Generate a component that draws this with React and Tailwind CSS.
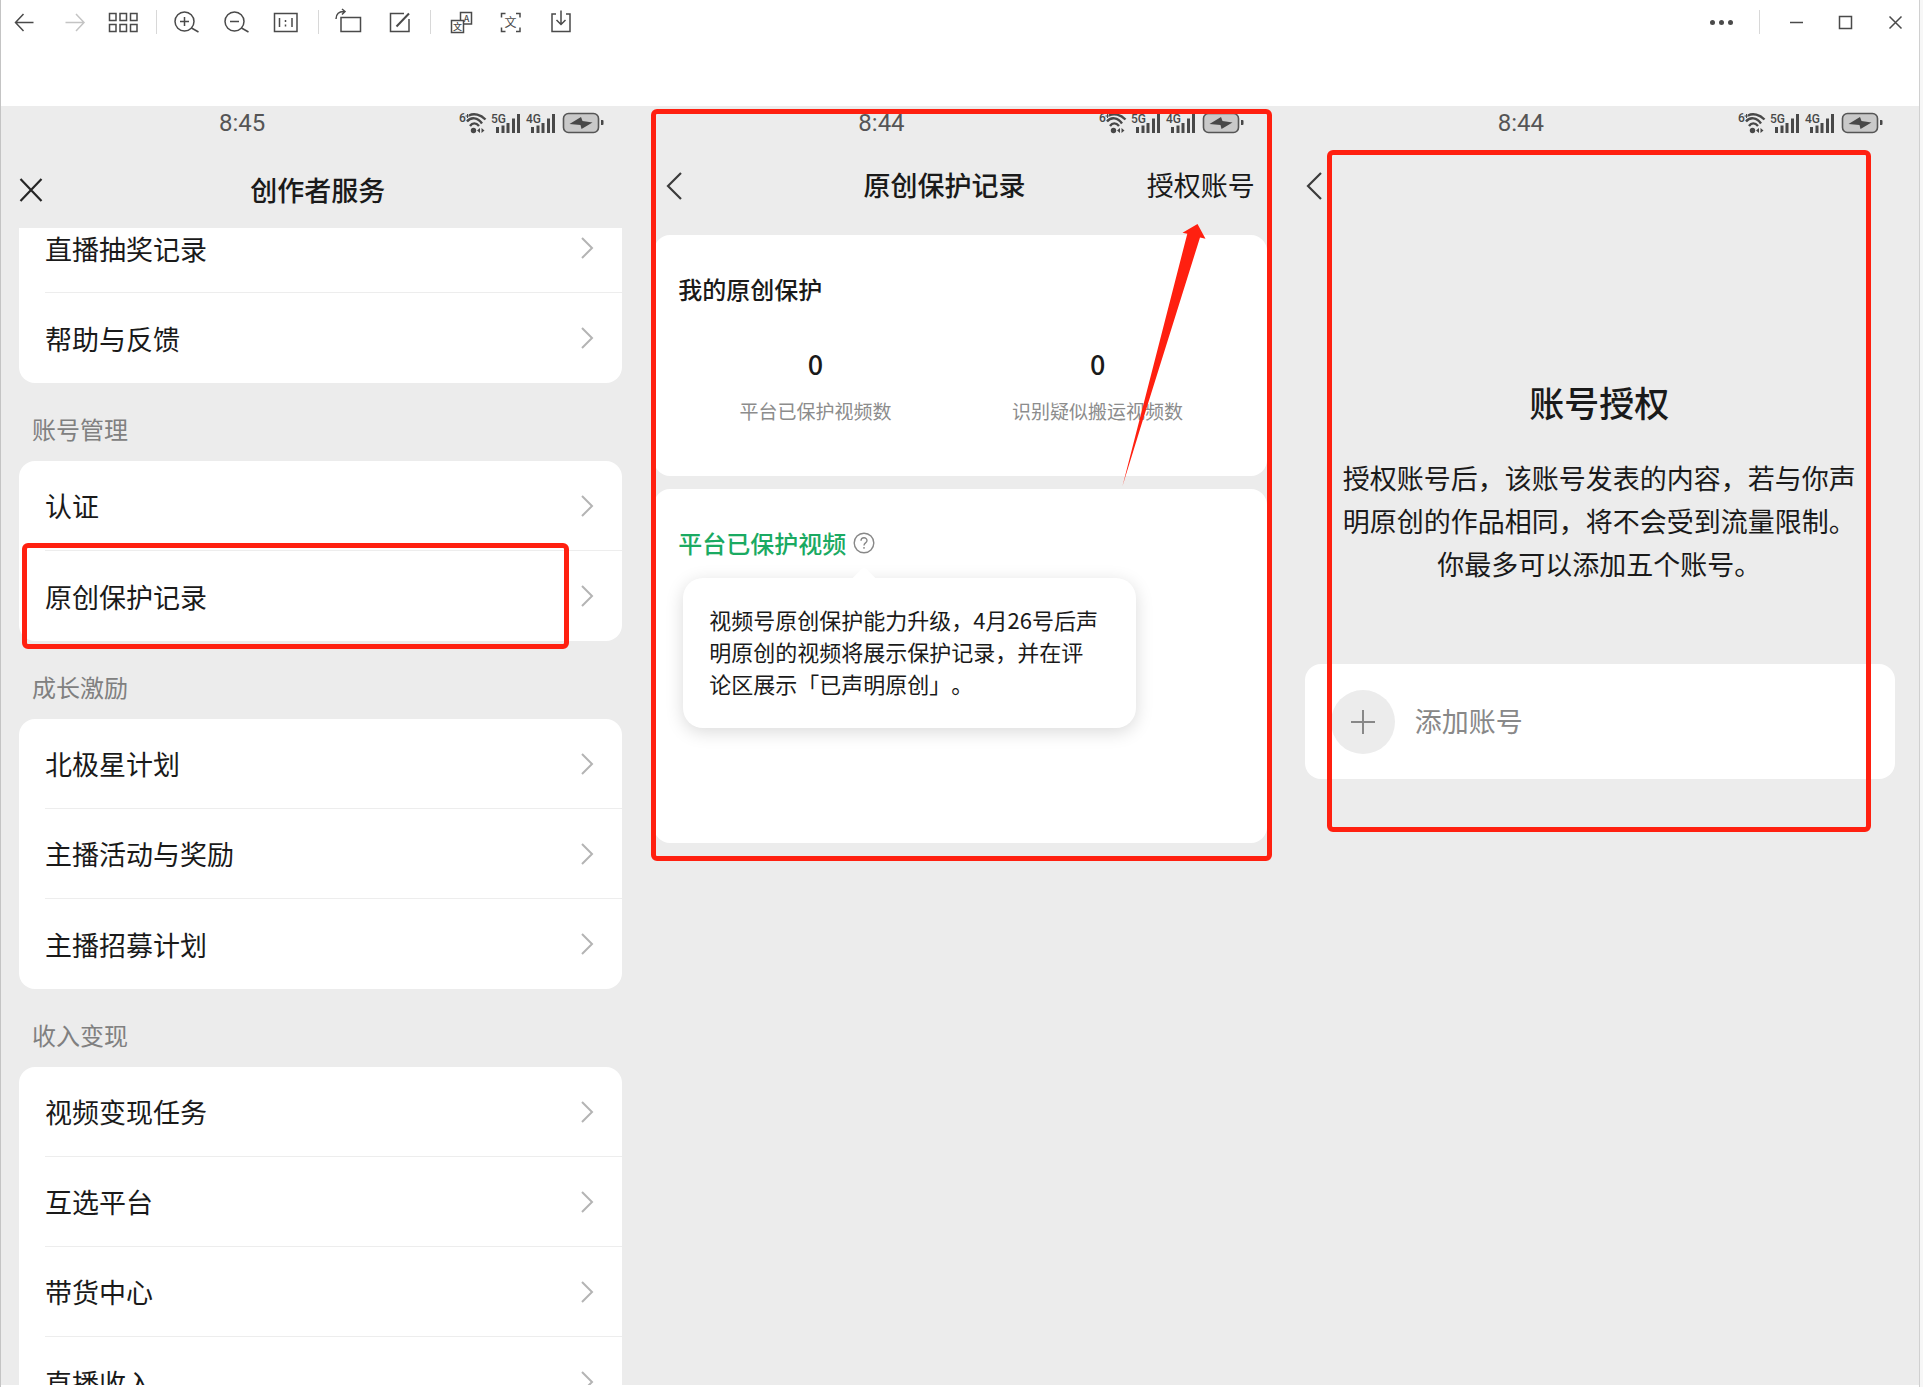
import React from 'react';

const sections = [
  { title: '账号管理', items: ['认证', '原创保护记录'] },
  { title: '成长激励', items: ['北极星计划', '主播活动与奖励', '主播招募计划'] },
  { title: '收入变现', items: ['视频变现任务', '互选平台', '带货中心', '直播收入'] },
];

function ToolButton({ label, disabled, children }) {
  return (
    <button type="button" aria-label={label} disabled={disabled} className="h-11 w-[50px] shrink-0">
      <svg
        width="50"
        height="44"
        viewBox="0 0 50 44"
        fill="none"
        stroke={disabled ? '#c4c4c4' : '#4a4a4a'}
        strokeWidth="1.5"
      >
        {children}
      </svg>
    </button>
  );
}

function Divider({ wide }) {
  return (
    <div className={wide ? 'flex w-5 shrink-0 justify-center' : 'flex w-3 shrink-0 justify-center pr-0.5'}>
      <span className="h-6 w-px bg-[#d8d8d8]" />
    </div>
  );
}

function Toolbar() {
  return (
    <header className="flex h-[106px] shrink-0 items-start justify-between bg-white">
      <div className="flex items-center">
        <ToolButton label="后退">
          <path d="M32.500 22.500H14.500M22.500 14L14.500 22.500L22.500 31" />
        </ToolButton>
        <ToolButton label="前进" disabled>
          <path d="M14.500 22.500H33M25 14L33 22.500L25 31" />
        </ToolButton>
        <ToolButton label="缩略图">
          <path d="M8.500 13.500h6.500v7H8.500zM19 13.500h6.500v7H19zM29.500 13.500h6.500v7h-6.500zM8.500 24.500h6.500v7H8.500zM19 24.500h6.500v7H19zM29.500 24.500h6.500v7h-6.500z" />
        </ToolButton>
        <Divider />
        <ToolButton label="放大">
          <circle cx="21.500" cy="21.500" r="9.500" />
          <path d="M17 21.500h9M21.500 17v9M28.500 28l7 4" />
        </ToolButton>
        <ToolButton label="缩小">
          <circle cx="21.500" cy="21.500" r="9.500" />
          <path d="M17 21.500h9M28.500 28l7 4" />
        </ToolButton>
        <ToolButton label="原始大小">
          <path d="M11.500 13.500h22.500v18H11.500zM16.500 18v9M29 18v9M22.500 20v2M22.500 24.500v2" />
        </ToolButton>
        <Divider />
        <ToolButton label="旋转">
          <path d="M16 17.500h19.500v14H16zM11 19C11 14 14 11 19.500 11.500M17 9l3 2.500l-3 3" />
        </ToolButton>
        <ToolButton label="编辑">
          <path d="M29 13.500H15.500v18H34V19" />
          <path d="M34 13.500L21.500 26.500" strokeWidth="2" />
        </ToolButton>
        <Divider />
        <ToolButton label="翻译">
          <path d="M23.500 20v-7.500h11V24h-7.500M14.500 20.500h12v12h-12z" />
          <g fill="#4a4a4a" stroke="none" textAnchor="middle" className="font-medium">
            <text x="29.500" y="21.500" fontSize="9">A</text>
            <text x="20.500" y="30" fontSize="9">文</text>
          </g>
        </ToolButton>
        <ToolButton label="识别文字">
          <path d="M18.500 13.500h-4v4M29 13.500h4v4M14.500 27.500v4h4M33 27.500v4h-4" />
          <text x="23.500" y="27" fontSize="12" textAnchor="middle" fill="#4a4a4a" stroke="none">文</text>
        </ToolButton>
        <ToolButton label="保存">
          <path d="M19 14h-4v17.500h18V14h-4M24 10.500v14M19.500 20L24 24.500l4.500-4.500" />
        </ToolButton>
      </div>
      <div className="flex items-center">
        <ToolButton label="更多">
          <g fill="#4a4a4a" stroke="none">
            <circle cx="13.500" cy="22.500" r="2.500" />
            <circle cx="22.500" cy="22.500" r="2.500" />
            <circle cx="31.500" cy="22.500" r="2.500" />
          </g>
        </ToolButton>
        <Divider wide />
        <ToolButton label="最小化">
          <path d="M21 22.500h13" />
        </ToolButton>
        <ToolButton label="最大化">
          <path d="M20.500 16.500h12v12h-12z" />
        </ToolButton>
        <ToolButton label="关闭">
          <path d="M20.500 16.500l12 12M32.500 16.500l-12 12" />
        </ToolButton>
      </div>
    </header>
  );
}

function StatusIcons() {
  return (
    <svg width="146" height="23" viewBox="0 0 146 23" fill="#484848" className="font-[Roboto,sans-serif] font-medium" aria-hidden="true">
      <text x="0" y="10" fontSize="12">6</text>
      <path d="M6.500 4h4M8.500 2v4" stroke="#484848" strokeWidth="1" />
      <g fill="none" stroke="#484848" strokeWidth="2.400">
        <path d="M10 3.500C15 1 21.500 2.500 26.500 7.500" />
        <path d="M8 9.500C12 4.500 19 5.500 23 11.500" />
        <path d="M11 14C13.500 10.500 17 10.500 20 14" />
      </g>
      <circle cx="14.500" cy="18.500" r="2.700" />
      <path d="M18 18.500l3-2.500v5zM25.500 18.500l-3-2.500v5z" />
      <text x="32" y="11" fontSize="12">5G</text>
      <path d="M37 15h3v6h-3zM42.500 13.500h3V21h-3zM47.500 11h3v10h-3zM53 6.500h3V21h-3zM58 2h3v19h-3z" />
      <text x="67" y="11" fontSize="12">4G</text>
      <path d="M72 15h3v6h-3zM77.500 13.500h3V21h-3zM82.500 11h3v10h-3zM88 6.500h3V21h-3zM93 2h3v19h-3z" />
      <rect x="104.500" y="1.500" width="35" height="19" rx="5" fill="#c9c9c9" stroke="#555555" strokeWidth="1.600" />
      <path d="M142 8h1.500q1 0 1 1v3q0 1-1 1H142z" />
      <path d="M110.500 12L122 5L123.500 9L133.500 10.500L122.500 17L121.500 13z" />
    </svg>
  );
}

function StatusBar({ time }) {
  return (
    <div className="flex h-[34px] shrink-0 items-center justify-between pl-[218px] pr-[35px]">
      <span className="font-[Roboto,sans-serif] text-2xl text-[#555555]">{time}</span>
      <StatusIcons />
    </div>
  );
}

function BackButton() {
  return (
    <button type="button" aria-label="返回">
      <svg width="16" height="30" viewBox="0 0 16 30" fill="none" stroke="#3c3c3c" strokeWidth="2.200">
        <path d="M15 2L2 15l13 13" />
      </svg>
    </button>
  );
}

function MenuRow({ label, marked }) {
  return (
    <li className="group relative pl-[26px]">
      <a href="#" className="flex h-[90px] items-center justify-between border-b border-[#ededed] pr-7 group-last:border-b-0">
        <span className="pt-0.5">{label}</span>
        <svg width="14" height="24" viewBox="0 0 14 24" fill="none" stroke="#b4b4b4" strokeWidth="2">
          <path d="M2 2l10 10L2 22" />
        </svg>
      </a>
      {marked && <div className="absolute -top-2 -bottom-2 left-[3px] right-[53px] rounded-md border-5 border-[#ff2010]" />}
    </li>
  );
}

function CreatorPanel() {
  return (
    <section className="flex min-w-0 flex-1 flex-col overflow-hidden">
      <StatusBar time="8:45" />
      <div className="grid h-[88px] shrink-0 grid-cols-[1fr_auto_1fr] items-center pt-4 pb-1 pl-[18px] pr-6">
        <button type="button" aria-label="关闭页面" className="justify-self-start">
          <svg width="24" height="24" viewBox="0 0 24 24" fill="none" stroke="#262626" strokeWidth="2.200">
            <path d="M1.500 1l21 22M22.500 1l-21 22" />
          </svg>
        </button>
        <h1 className="text-[27px] leading-10 font-medium">创作者服务</h1>
      </div>
      {/* scrolled list, its first row is cut off by the header */}
      <div className="flex min-h-0 flex-1 flex-col justify-start overflow-hidden px-[18px] text-[27px]">
        <ul className="shrink-0 overflow-hidden rounded-b-2xl bg-white">
          <li className="pl-[26px]">
            <a href="#" className="flex h-[65px] items-start justify-between border-b border-[#ededed] pr-7">
              <span className="leading-[42px]">直播抽奖记录</span>
              <svg width="14" height="40" viewBox="0 0 14 40" fill="none" stroke="#b4b4b4" strokeWidth="2">
                <path d="M2 10l10 10L2 30" />
              </svg>
            </a>
          </li>
          <MenuRow label="帮助与反馈" />
        </ul>
        {sections.map((section) => (
          <React.Fragment key={section.title}>
            <h2 className="flex h-[78px] shrink-0 items-center pt-3.5 pl-[13px] text-2xl text-[#808080]">{section.title}</h2>
            <ul className="shrink-0 rounded-2xl bg-white">
              {section.items.map((item) => (
                <MenuRow key={item} label={item} marked={item === '原创保护记录'} />
              ))}
            </ul>
          </React.Fragment>
        ))}
      </div>
    </section>
  );
}

function Stat({ value, label }) {
  return (
    <div className="flex flex-col items-center">
      <span className="text-[27px] leading-10 font-medium">{value}</span>
      <span className="mt-[7px] text-[19px] leading-10 text-[#8c8c8c]">{label}</span>
    </div>
  );
}

function ProtectionPanel() {
  return (
    <section className="relative min-w-0 flex-1">
      <StatusBar time="8:44" />
      <div className="grid h-[95px] grid-cols-[1fr_auto_1fr] items-center pt-2 pb-3 pl-[26px] pr-[25px] text-[27px]">
        <BackButton />
        <h1 className="pr-8 font-medium">原创保护记录</h1>
        <button type="button" className="justify-self-end">授权账号</button>
      </div>
      <div className="flex flex-col gap-[13px] pl-[14px] pr-[13px]">
        <div className="rounded-2xl bg-white pt-[34px] pb-[45px]">
          <h2 className="pl-6 text-2xl leading-10 font-medium">我的原创保护</h2>
          <div className="mt-[35px] grid grid-cols-2 pl-5 pr-7">
            <Stat value="0" label="平台已保护视频数" />
            <Stat value="0" label="识别疑似搬运视频数" />
          </div>
        </div>
        <div className="rounded-2xl bg-white pt-[34px] pb-[115px] pl-6">
          <div className="flex items-center gap-[7px]">
            <h2 className="text-2xl leading-10 font-medium text-[#1aaa62]">平台已保护视频</h2>
            <button type="button" aria-label="说明">
              <svg width="22" height="22" viewBox="0 0 22 22" fill="none" stroke="#888888" strokeWidth="1.400">
                <circle cx="11" cy="11" r="9.800" />
                <path d="M8 8.800C8 4.800 14 4.800 14 8.500C14 11 11 10.800 11 13.500M11 15v1.800" />
              </svg>
            </button>
          </div>
          <div className="relative mt-[15px] ml-[5px] w-[453px] max-w-full rounded-[20px] bg-white px-[26px] pt-[25px] pb-[29px] shadow-[0_4px_18px_rgba(0,0,0,0.15)]">
            <div className="absolute -top-2 left-[173px] size-4 rotate-45 rounded-tl-sm bg-white" />
            <p className="text-[22px] leading-8 whitespace-nowrap">
              视频号原创保护能力升级，4月26号后声
              <br />
              明原创的视频将展示保护记录，并在评
              <br />
              论区展示「已声明原创」。
            </p>
          </div>
        </div>
      </div>
      <div className="absolute top-[3px] left-[11px] right-2 h-[752px] rounded-md border-5 border-[#ff2010]" />
      <svg className="absolute top-[118px] right-[74px]" width="84" height="264" viewBox="0 0 84 264" fill="#ff2010" aria-hidden="true">
        <path d="M75.500 0L83.500 14.700L78 13.500L21.500 194L.5 262L65.300 9.700L60.500 8.700z" />
      </svg>
    </section>
  );
}

function AuthorizePanel() {
  return (
    <section className="relative min-w-0 flex-1">
      <StatusBar time="8:44" />
      <div className="flex h-[95px] items-center pt-2 pb-3 pl-[26px]">
        <BackButton />
      </div>
      <div className="pt-[137px] text-center">
        <h1 className="text-[35px] leading-[60px] font-medium">账号授权</h1>
        <p className="mt-6 text-[27px] leading-[43px]">
          授权账号后，该账号发表的内容，若与你声
          <br />
          明原创的作品相同，将不会受到流量限制。
          <br />
          你最多可以添加五个账号。
        </p>
      </div>
      <button type="button" className="mt-[79px] ml-[25px] flex h-[115px] w-[590px] max-w-full items-center gap-5 rounded-2xl bg-white pl-[26px] text-[27px] text-[#888888]">
        <span className="flex size-16 items-center justify-center rounded-full bg-[#ececec]">
          <svg width="24" height="24" viewBox="0 0 24 24" stroke="#888888" strokeWidth="2">
            <path d="M0 12h24M12 0v24" />
          </svg>
        </span>
        添加账号
      </button>
      <div className="absolute top-[44px] left-[47px] right-12 h-[682px] rounded-md border-5 border-[#ff2010]" />
    </section>
  );
}

export default function App() {
  return (
    <div className="flex h-screen flex-col bg-[#f7f7f7] pr-[3px] font-['Noto_Sans_CJK_SC',sans-serif] text-[#1a1a1a] [text-spacing-trim:space-all]">
      <div className="flex min-h-0 flex-1 flex-col border-x border-l-[#c4c4c4] border-r-[#d0d0d0] bg-white pb-[2px]">
        <Toolbar />
        <main className="flex min-h-0 flex-1 overflow-hidden bg-[#ececec]">
          <CreatorPanel />
          <ProtectionPanel />
          <AuthorizePanel />
        </main>
      </div>
    </div>
  );
}
